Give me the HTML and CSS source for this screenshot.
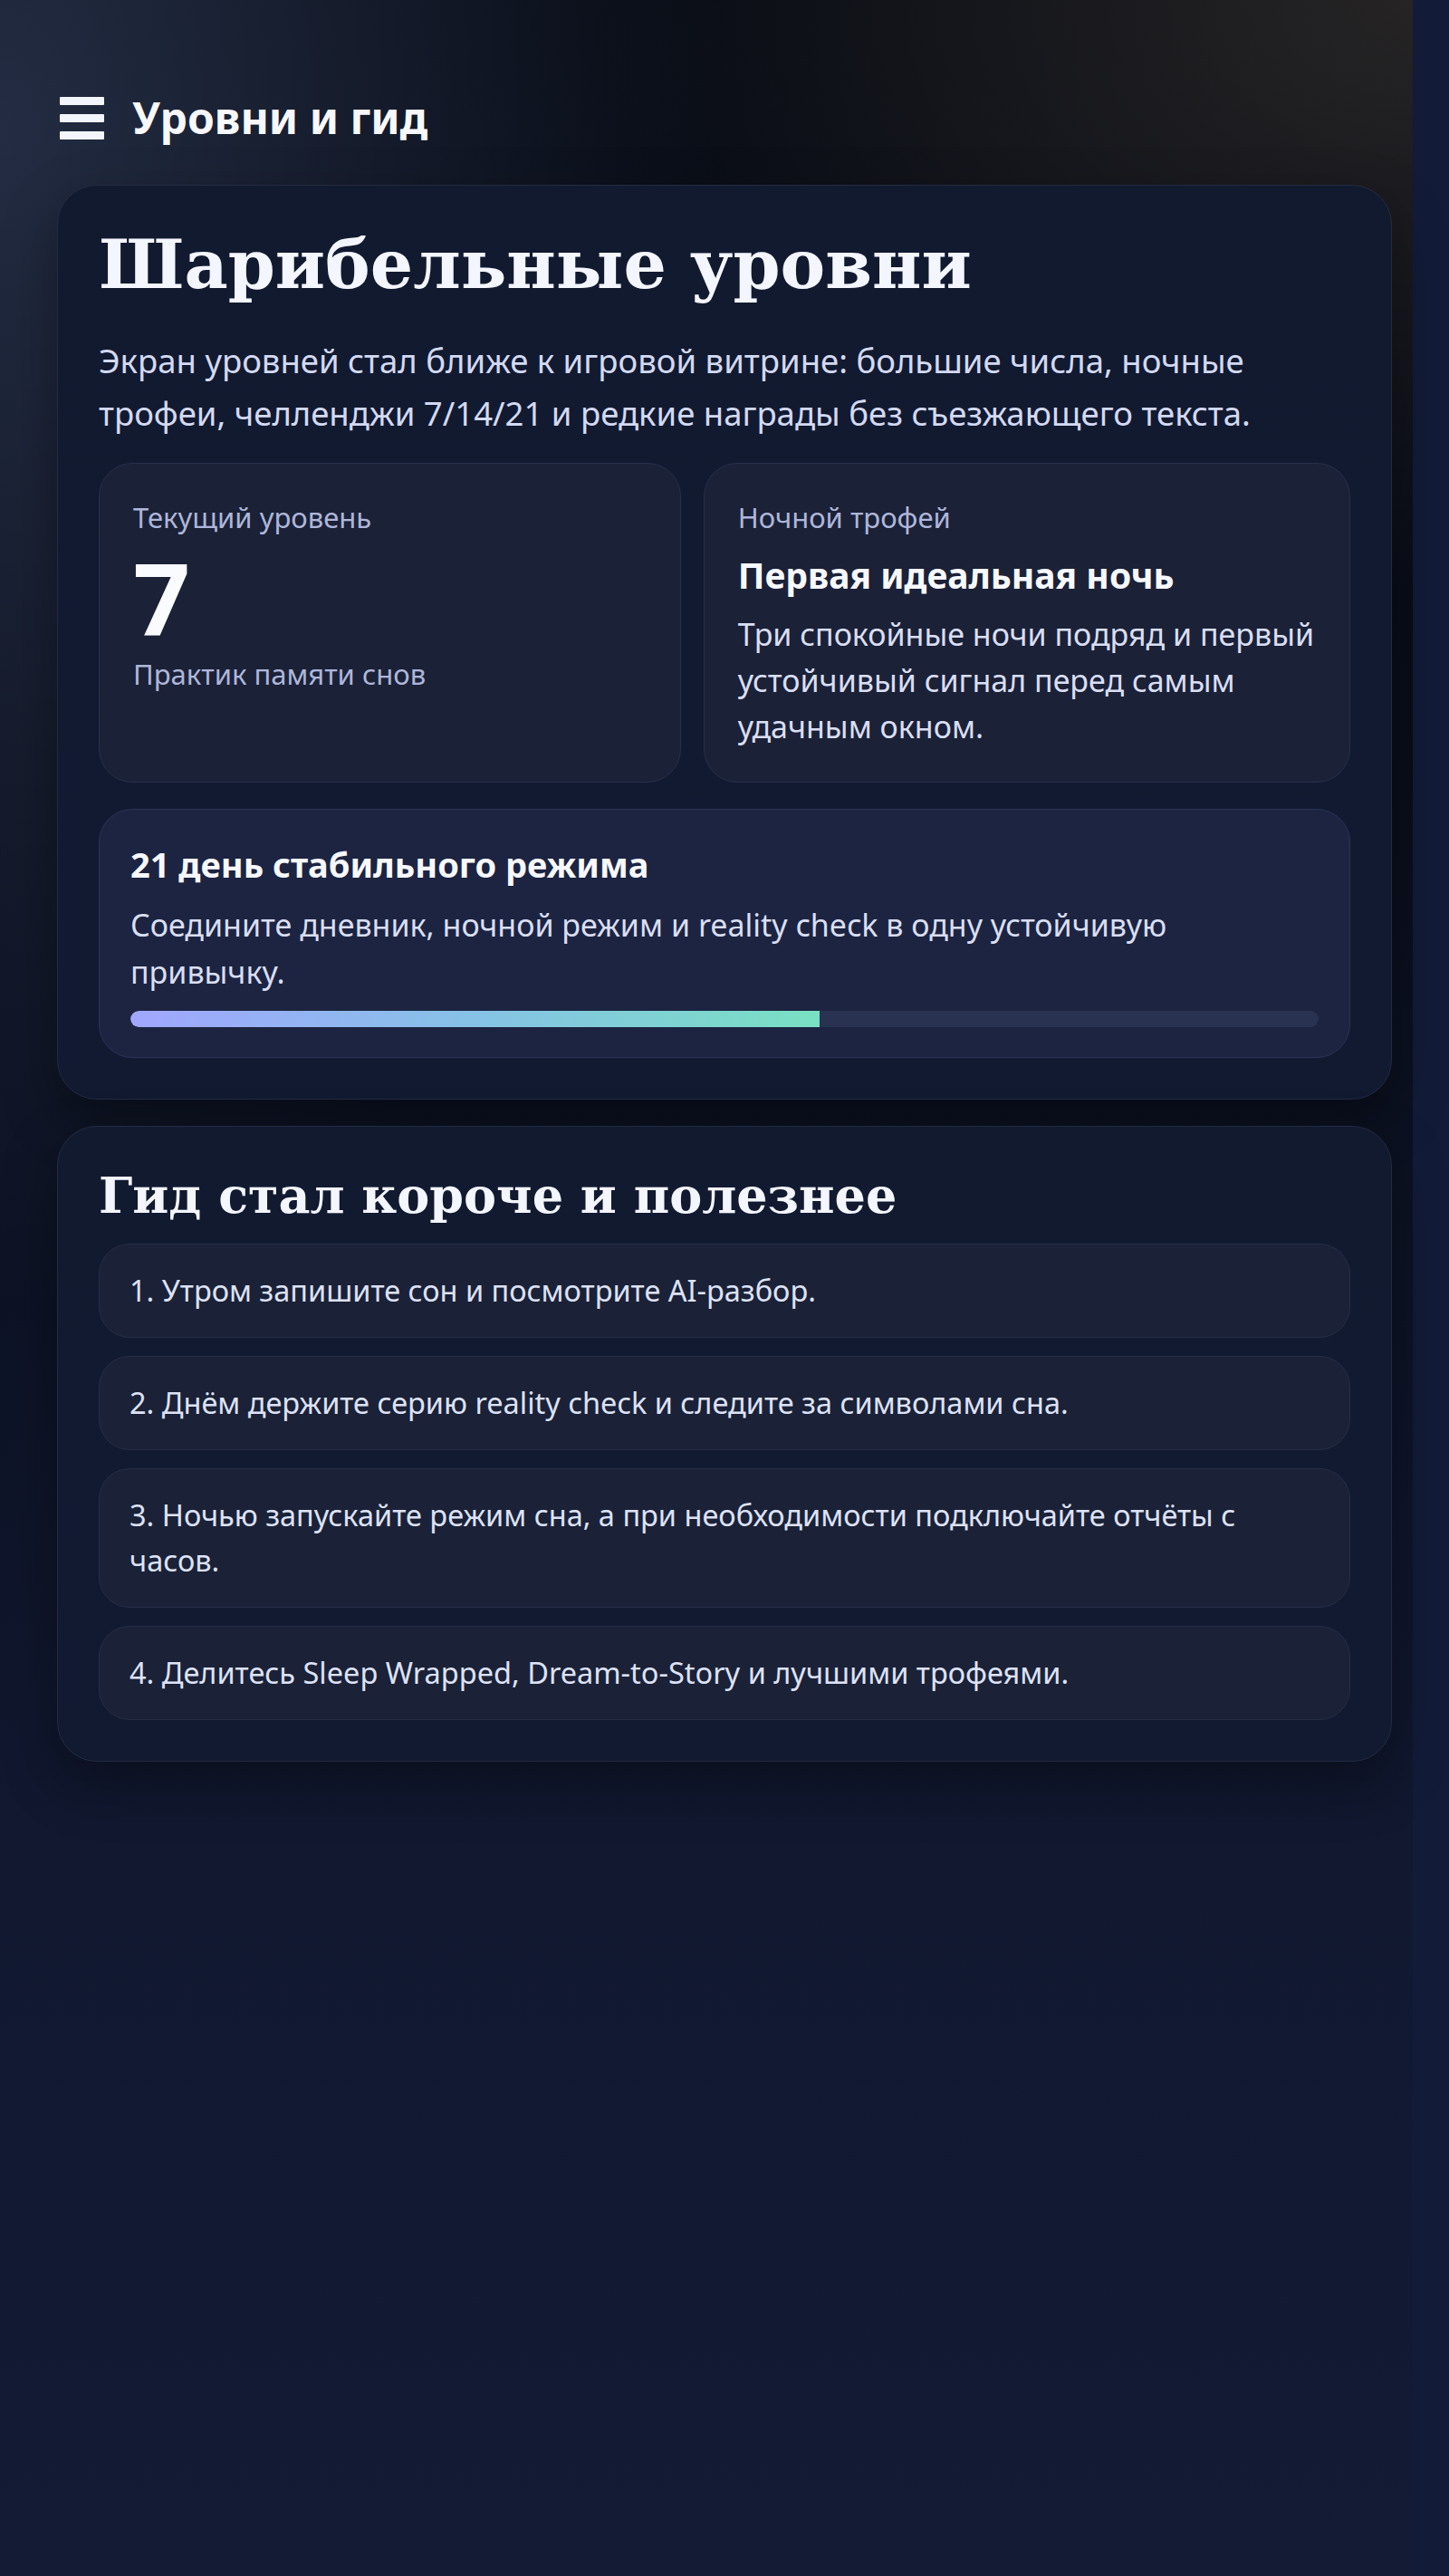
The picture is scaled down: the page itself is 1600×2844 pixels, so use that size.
FILE: index.html
```html
<!DOCTYPE html>
<html lang="ru">
<head>
<meta charset="utf-8">
<title>Уровни и гид</title>
<link rel="stylesheet" href="styles.css">
</head>
<body>
<div class="page">
  <header class="topbar">
    <div class="burger" aria-hidden="true"><span></span><span></span><span></span></div>
    <div class="topbar-title">Уровни и гид</div>
  </header>

  <section class="panel">
    <h1 class="panel-title">Шарибельные уровни</h1>
    <p class="lead">Экран уровней стал ближе к игровой витрине: большие числа, ночные трофеи, челленджи 7/14/21 и редкие награды без съезжающего текста.</p>

    <div class="stats">
      <div class="tile">
        <div class="tile-label">Текущий уровень</div>
        <div class="level">7</div>
        <div class="tile-label level-name">Практик памяти снов</div>
      </div>
      <div class="tile">
        <div class="tile-label">Ночной трофей</div>
        <div class="tile-title">Первая идеальная ночь</div>
        <div class="tile-text">Три спокойные ночи подряд и первый устойчивый сигнал перед самым удачным окном.</div>
      </div>
    </div>

    <div class="challenge">
      <div class="challenge-title">21 день стабильного режима</div>
      <div class="challenge-text">Соедините дневник, ночной режим и reality check в одну устойчивую привычку.</div>
      <div class="bar"><div class="bar-fill" style="width: 58%"></div></div>
    </div>
  </section>

  <section class="panel">
    <h2 class="panel-subtitle">Гид стал короче и полезнее</h2>
    <div class="steps">
      <div class="step">1. Утром запишите сон и посмотрите AI-разбор.</div>
      <div class="step">2. Днём держите серию reality check и следите за символами сна.</div>
      <div class="step">3. Ночью запускайте режим сна, а при необходимости подключайте отчёты с часов.</div>
      <div class="step">4. Делитесь Sleep Wrapped, Dream-to-Story и лучшими трофеями.</div>
    </div>
  </section>
</div>
</body>
</html>
```

FILE: styles.css
```css
html, body {
  margin: 0;
  padding: 0;
}

body {
  min-height: 2844px;
  background-color: #121b38;
  background-image:
    radial-gradient(ellipse 800px 1300px at 0% 5%, rgba(42, 52, 78, 0.8), rgba(42, 52, 78, 0) 100%),
    radial-gradient(ellipse 900px 650px at 100% 0%, rgba(48, 44, 42, 0.75), rgba(48, 44, 42, 0) 100%),
    linear-gradient(180deg, #070b14 0%, #0a0e1a 30%, #0d1325 50%, #111830 72%, #131b35 100%);
  background-size: 1560px 100%;
  background-repeat: no-repeat;
  font-family: "Noto Sans", "Open Sans", sans-serif;
  color: #d7ddf4;
}

.page {
  padding: 106px 63px 60px 63px;
}

.topbar {
  display: flex;
  align-items: center;
  gap: 31px;
  height: 48px;
  padding-left: 3px;
  margin-bottom: 50px;
}

.burger {
  display: flex;
  flex-direction: column;
  gap: 10px;
  width: 49px;
}

.burger span {
  display: block;
  height: 9px;
  background: #f3f5fc;
  border-radius: 1px;
}

.topbar-title {
  font-size: 48px;
  font-weight: 700;
  line-height: 48px;
  color: #f7f8fe;
}

.panel {
  background: linear-gradient(180deg, #121a30 0%, #111a31 100%);
  border: 1px solid #232b42;
  border-radius: 44px;
  padding: 45px;
  box-shadow: 0 24px 60px rgba(0, 0, 0, 0.35);
  margin-bottom: 29px;
}

.panel-title {
  margin: 0;
  font-family: "DejaVu Serif", Georgia, serif;
  font-size: 74.5px;
  line-height: 84px;
  font-weight: 700;
  color: #f4f6ff;
}

.lead {
  margin: 35px 0 0 0;
  font-size: 36.5px;
  line-height: 58px;
  color: #d3d9f2;
}

.stats {
  display: grid;
  grid-template-columns: 0.9fr 1fr;
  gap: 25px;
  margin-top: 26px;
}

.tile {
  background: #1b2137;
  border: 1px solid #283049;
  border-radius: 37px;
  padding: 37px 36px 35px 37px;
}

.tile-label {
  font-size: 31px;
  line-height: 44.8px;
  color: #aeb6da;
}

.level {
  margin-top: 9px;
  font-size: 110px;
  line-height: 110px;
  font-weight: 700;
  color: #fafbff;
}

.level-name {
  margin-top: 9px;
}

.tile-title {
  margin-top: 17px;
  font-size: 39px;
  line-height: 48px;
  font-weight: 700;
  color: #f7f8ff;
}

.tile-text {
  margin-top: 16px;
  font-size: 34px;
  line-height: 51px;
  color: #d9def3;
}

.challenge {
  margin-top: 29px;
  background: #1c2441;
  border: 1px solid #2b3457;
  border-radius: 37px;
  padding: 36px 34px 33px 34px;
}

.challenge-title {
  font-size: 38px;
  line-height: 48px;
  font-weight: 700;
  color: #f7f8ff;
}

.challenge-text {
  margin-top: 17px;
  font-size: 34px;
  line-height: 52px;
  color: #d9def3;
}

.bar {
  margin-top: 17px;
  height: 18px;
  border-radius: 9px;
  background: #2a3251;
  overflow: hidden;
}

.bar-fill {
  height: 100%;
  border-radius: 9px 0 0 9px;
  background: linear-gradient(90deg, #a1a6ff 0%, #86c2e6 50%, #79e0c2 100%);
}

.panel-subtitle {
  margin: 0;
  font-family: "DejaVu Serif", Georgia, serif;
  font-size: 54px;
  line-height: 62px;
  font-weight: 700;
  color: #f4f6ff;
}

.steps {
  display: flex;
  flex-direction: column;
  gap: 20px;
  margin-top: 22px;
}

.step {
  background: #1b2137;
  border: 1px solid #262e46;
  border-radius: 34px;
  padding: 26px 33px;
  font-size: 32.5px;
  line-height: 50px;
  color: #dde2f6;
}
```
